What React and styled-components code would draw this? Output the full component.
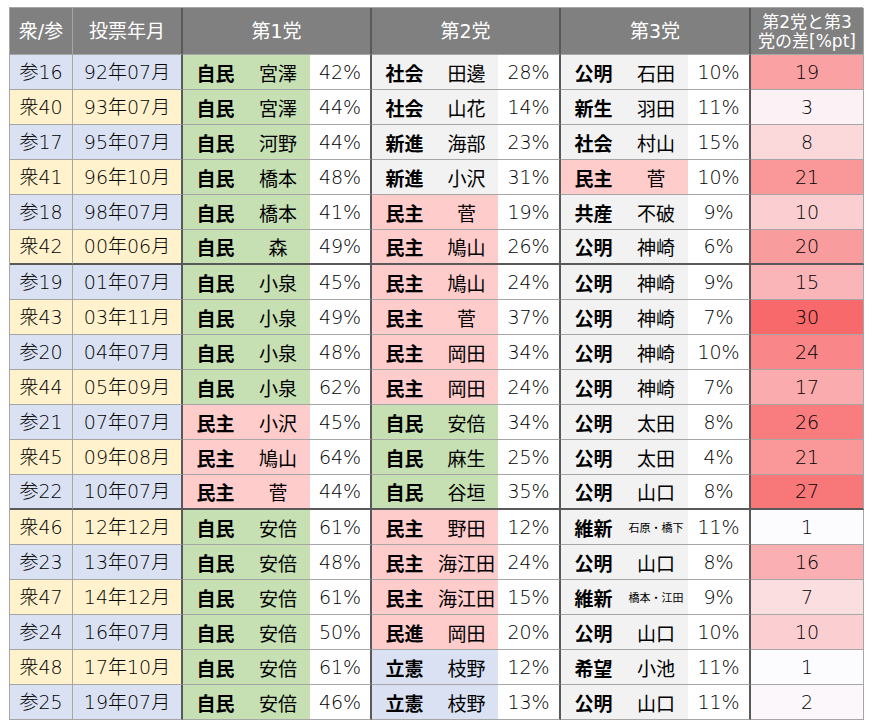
import React from 'react';
import styled, { createGlobalStyle, css } from 'styled-components';

const GlobalStyle = createGlobalStyle`
  html, body {
    margin: 0;
    padding: 0;
    background: #ffffff;
  }
  body {
    font-family: "DejaVu Sans", "Noto Sans CJK JP", sans-serif;
    color: #000;
  }
`;

const THIN = '#a6a6a6';
const THICK = '#595959';

// party background colours, as in the sheet
const partyBg = (name) => {
  if (name === '自民') return '#c6e0b4';
  if (name === '民主' || name === '民進') return '#ffcccc';
  if (name === '立憲') return '#d9e1f2';
  return '#f2f2f2';
};

// two-colour scale: 1 -> white, 30 -> red
const diffBg = (v) => {
  const t = (v - 1) / 29;
  const r = Math.round(252 + (248 - 252) * t);
  const g = Math.round(252 + (105 - 252) * t);
  const b = Math.round(255 + (107 - 255) * t);
  return `rgb(${r}, ${g}, ${b})`;
};

const rows = [
  ['参16', '92年07月', ['自民', '宮澤', 42], ['社会', '田邊', 28], ['公明', '石田', 10], 19],
  ['衆40', '93年07月', ['自民', '宮澤', 44], ['社会', '山花', 14], ['新生', '羽田', 11], 3],
  ['参17', '95年07月', ['自民', '河野', 44], ['新進', '海部', 23], ['社会', '村山', 15], 8],
  ['衆41', '96年10月', ['自民', '橋本', 48], ['新進', '小沢', 31], ['民主', '菅', 10], 21],
  ['参18', '98年07月', ['自民', '橋本', 41], ['民主', '菅', 19], ['共産', '不破', 9], 10],
  ['衆42', '00年06月', ['自民', '森', 49], ['民主', '鳩山', 26], ['公明', '神崎', 6], 20],
  ['参19', '01年07月', ['自民', '小泉', 45], ['民主', '鳩山', 24], ['公明', '神崎', 9], 15],
  ['衆43', '03年11月', ['自民', '小泉', 49], ['民主', '菅', 37], ['公明', '神崎', 7], 30],
  ['参20', '04年07月', ['自民', '小泉', 48], ['民主', '岡田', 34], ['公明', '神崎', 10], 24],
  ['衆44', '05年09月', ['自民', '小泉', 62], ['民主', '岡田', 24], ['公明', '神崎', 7], 17],
  ['参21', '07年07月', ['民主', '小沢', 45], ['自民', '安倍', 34], ['公明', '太田', 8], 26],
  ['衆45', '09年08月', ['民主', '鳩山', 64], ['自民', '麻生', 25], ['公明', '太田', 4], 21],
  ['参22', '10年07月', ['民主', '菅', 44], ['自民', '谷垣', 35], ['公明', '山口', 8], 27],
  ['衆46', '12年12月', ['自民', '安倍', 61], ['民主', '野田', 12], ['維新', '石原・橋下', 11], 1],
  ['参23', '13年07月', ['自民', '安倍', 48], ['民主', '海江田', 24], ['公明', '山口', 8], 16],
  ['衆47', '14年12月', ['自民', '安倍', 61], ['民主', '海江田', 15], ['維新', '橋本・江田', 9], 7],
  ['参24', '16年07月', ['自民', '安倍', 50], ['民進', '岡田', 20], ['公明', '山口', 10], 10],
  ['衆48', '17年10月', ['自民', '安倍', 61], ['立憲', '枝野', 12], ['希望', '小池', 11], 1],
  ['参25', '19年07月', ['自民', '安倍', 46], ['立憲', '枝野', 13], ['公明', '山口', 11], 2],
];

// rows after which the sheet draws a heavy rule
const thickAfter = [5, 12];

const Page = styled.div`
  padding: 7px 0 0 9px;
`;

const Sheet = styled.div`
  display: grid;
  grid-template-columns: 63px 110px 63px 64px 62px 63px 63px 63px 63px 64px 63px 113px;
  grid-template-rows: 47px repeat(19, 35px);
  width: 854px;
  border-top: 1px solid ${THIN};
  border-left: 1px solid ${THIN};
  box-sizing: border-box;
`;

const Cell = styled.div`
  box-sizing: border-box;
  display: flex;
  align-items: center;
  justify-content: center;
  font-size: 19px;
  line-height: 1;
  white-space: nowrap;
  background: ${(p) => p.$bg || '#fff'};
  border-bottom: ${(p) => (p.$thickBottom ? `2px solid ${THICK}` : `1px solid ${THIN}`)};
  border-right: ${(p) =>
    p.$edge === 'thick' ? `2px solid ${THICK}` : p.$edge === 'none' ? '0' : `1px solid ${THIN}`};
`;

const Head = styled(Cell)`
  background: #808080;
  color: #fff;
  ${(p) => p.$span && css`grid-column: span ${p.$span};`}
`;

const HeadSmall = styled(Head)`
  font-size: 17px;
  line-height: 19px;
  text-align: center;
  padding-top: 1px;
`;

const PartyName = styled(Cell)`
  font-family: "Noto Sans CJK JP", sans-serif;
  font-weight: 700;
  padding-left: 2px;
`;

const Leader = styled(Cell)`
  font-family: "Noto Sans CJK JP", sans-serif;
  font-size: ${(p) => (p.$small ? '11px' : '19px')};
`;

// figures: thin digits, as the sheet's gothic face
const Num = styled(Cell)`
  font-weight: 200;
`;

const Pct = styled(Num)``;

const PartyGroup = ({ party, thick }) => {
  const [name, leader, pct] = party;
  const bg = partyBg(name);
  return (
    <>
      <PartyName $bg={bg} $edge="none" $thickBottom={thick}>{name}</PartyName>
      <Leader $bg={bg} $edge="none" $thickBottom={thick} $small={leader.length > 3}>
        {leader}
      </Leader>
      <Pct $edge="thick" $thickBottom={thick}>{pct}%</Pct>
    </>
  );
};

export default function App() {
  return (
    <Page>
      <GlobalStyle />
      <Sheet>
        <Head>衆/参</Head>
        <Head $edge="thick">投票年月</Head>
        <Head $span={3} $edge="thick">第1党</Head>
        <Head $span={3} $edge="thick">第2党</Head>
        <Head $span={3} $edge="thick">第3党</Head>
        <HeadSmall>
          第2党と第3
          <br />
          党の差[%pt]
        </HeadSmall>

        {rows.map(([kind, date, p1, p2, p3, diff], i) => {
          const thick = thickAfter.includes(i);
          const kindBg = kind.startsWith('参') ? '#d9e1f2' : '#fff2cc';
          return (
            <React.Fragment key={kind}>
              <Num $bg={kindBg} $thickBottom={thick}>{kind}</Num>
              <Num $bg={kindBg} $edge="thick" $thickBottom={thick}>{date}</Num>
              <PartyGroup party={p1} thick={thick} />
              <PartyGroup party={p2} thick={thick} />
              <PartyGroup party={p3} thick={thick} />
              <Num $bg={diffBg(diff)} $thickBottom={thick}>{diff}</Num>
            </React.Fragment>
          );
        })}
      </Sheet>
    </Page>
  );
}
